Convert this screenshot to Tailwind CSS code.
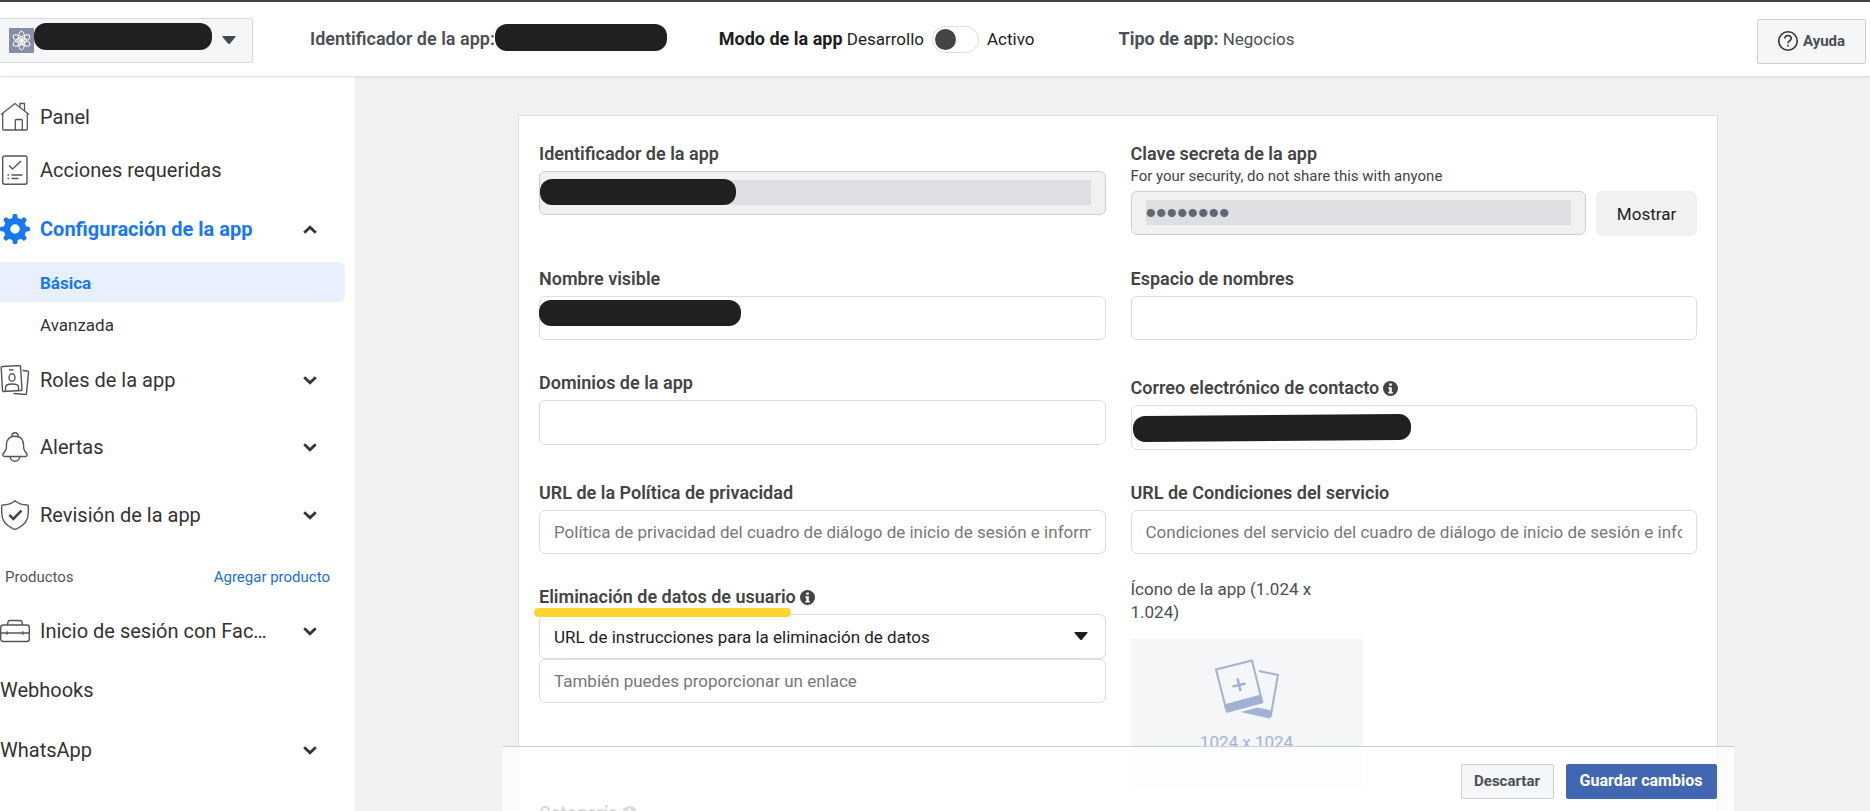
<!DOCTYPE html>
<html lang="es">
  <head>
    <meta charset="UTF-8">
    <meta name="viewport" content="width=device-width, initial-scale=1.0">
    <title>Configuración de la app</title>
    <script src="https://cdn.jsdelivr.net/npm/@tailwindcss/browser@4"></script>
  </head>
  <body class="h-screen flex flex-col overflow-hidden bg-white font-['Roboto',sans-serif] text-[17px] leading-6 text-[#1c1e21]">

    <!-- Cabecera -->
    <header class="shrink-0 h-[77px] flex items-center border-t-2 border-t-[#444] border-b border-b-[#dfe1e4] shadow-xs z-10 pr-1 whitespace-nowrap">
      <button type="button" aria-label="Seleccionar app" class="mt-[2px] w-[253px] h-[45px] flex items-center shrink-0 bg-[#f5f6f8] border border-l-0 border-[#d5d8de] rounded-r-xs pl-[9px] pr-4">
        <svg class="w-[25px] h-[25px] shrink-0" viewBox="0 0 25 25" fill="none" stroke="#fff">
          <rect width="25" height="25" rx="1" fill="#858ea3" stroke="none"/>
          <ellipse cx="12.500" cy="12.500" rx="3.500" ry="9.500"/>
          <ellipse cx="12.500" cy="12.500" rx="3.500" ry="9.500" transform="rotate(60 12.500 12.500)"/>
          <ellipse cx="12.500" cy="12.500" rx="3.500" ry="9.500" transform="rotate(120 12.500 12.500)"/>
          <circle cx="12.500" cy="12.500" r="2" fill="#fff"/>
        </svg>
        <span class="w-[178px] h-[27px] mb-2 shrink-0 rounded-xl bg-[#202020]"></span>
        <svg class="ml-auto w-[14px] h-2" viewBox="0 0 14 8"><path d="M1 0h12q1 0 .5 1L8 7.500q-1 1-2 0L.5 1Q0 0 1 0z" fill="#444950"/></svg>
      </button>
      <div class="ml-[57px] flex items-center text-[#4b4f56]">
        <b class="text-[18px] font-semibold">Identificador de la app:</b>
        <span class="w-[172px] h-[27px] mb-1 rounded-xl bg-[#202020]"></span>
      </div>
      <div class="ml-[52px] flex items-center">
        <span><b class="text-[18px]">Modo de la app</b> Desarrollo</span>
        <input id="modo" type="checkbox" role="switch" class="appearance-none ml-2 mr-2 w-[47px] h-[27px] rounded-full border border-[#dadde1] bg-white flex items-center px-[2px] before:content-[''] before:block before:w-[21px] before:h-[21px] before:rounded-full before:bg-[#444]">
        <label for="modo">Activo</label>
      </div>
      <div class="ml-[84px] text-[#4b4f56]"><b class="text-[18px]">Tipo de app:</b> Negocios</div>
      <button type="button" class="ml-auto mt-1 w-[109px] h-[45px] flex items-center justify-center gap-[5px] bg-[#f5f6f8] border border-[#ccd0d5] rounded-xs text-[15px] font-bold text-[#4b4f56]">
        <svg class="w-5 h-5" viewBox="0 0 20 20" fill="none" stroke="#333" stroke-width="1.600">
          <circle cx="10" cy="10" r="9.200"/>
          <path d="M6.800 7.500c0-4 6.400-4 6.400 0 0 2.300-3.200 2.300-3.200 4.700M10 13.800v1.700"/>
        </svg>
        Ayuda
      </button>
    </header>

    <div class="flex-1 min-h-0 flex">
      <!-- Menú lateral -->
      <nav class="w-[355px] shrink-0 pt-[13px] text-[20px] text-[#333] overflow-hidden">
        <a href="#" class="h-[54px] flex items-center gap-[10px]">
          <svg class="w-[30px] h-[30px]" viewBox="0 0 30 30" fill="none" stroke="#555" stroke-width="1.300">
            <path d="M1 12.500 15 1.500l14 11M2.700 11.500V27q0 1 1 1h22.600q1 0 1-1V11.500M20 5.200V1.500h4.500v7.200M15.300 28V18.500q0-1 1-1h5q1 0 1 1V28"/>
          </svg>
          Panel
        </a>
        <a href="#" class="h-[52px] flex items-center gap-[10px]">
          <svg class="w-[30px] h-[30px]" viewBox="0 0 30 30" fill="none" stroke="#555" stroke-width="1.400">
            <rect x="2.700" y="1" width="24.300" height="28.300" rx="2"/>
            <path d="m9 10.500 3.500 3.500L21 6M11.500 20h11M11.500 23.500h7M7.500 20H9M7.500 23.500H9"/>
          </svg>
          Acciones requeridas
        </a>
        <a href="#" class="h-[66px] flex items-center gap-[10px] pr-[38px] font-bold text-[#1877f2]">
          <svg class="w-[30px] h-[30px]" viewBox="0 0 30 30" fill="none">
            <circle cx="15" cy="15" r="8" stroke="#1877f2" stroke-width="6.500"/>
            <g fill="#1877f2">
              <path id="diente" d="M12 6l.7-4.800q.2-1.200 1.300-1.200h2q1.100 0 1.300 1.200L18 6z"/>
              <use href="#diente" transform="rotate(45 15 15)"/>
              <use href="#diente" transform="rotate(90 15 15)"/>
              <use href="#diente" transform="rotate(135 15 15)"/>
              <use href="#diente" transform="rotate(180 15 15)"/>
              <use href="#diente" transform="rotate(225 15 15)"/>
              <use href="#diente" transform="rotate(270 15 15)"/>
              <use href="#diente" transform="rotate(315 15 15)"/>
            </g>
          </svg>
          Configuración de la app
          <svg class="ml-auto w-[14px] h-[9px]" viewBox="0 0 14 9" fill="none" stroke="#333" stroke-width="2.800"><path d="m1.200 7.700 5.800-5.500 5.800 5.500"/></svg>
        </a>
        <a href="#" class="h-10 mr-[10px] flex items-center pl-10 pt-[2px] rounded-r-md bg-[#e7f0fc] text-[17px] font-bold text-[#1877f2]">Básica</a>
        <a href="#" class="h-10 my-[3px] flex items-center pl-10 text-[17px]">Avanzada</a>
        <a href="#" class="h-16 flex items-center gap-[10px] pr-[38px]">
          <svg class="w-[30px] h-[30px]" viewBox="0 0 30 30" fill="none" stroke="#555" stroke-width="1.400">
            <path d="m2.500 1.500 17-1q1 0 1 1l1.500 23q0 1-1 1l-17.500 1q-1 0-1-1L1.200 2.500q0-1 1.300-1zM22.500 5.500l5 .5q1 0 1 1l-2 21.500q0 1-1 1L13.500 28.500M9 5l4.500-.2"/>
            <ellipse cx="12" cy="12.500" rx="3" ry="3.800"/>
            <path d="M5.500 26v-3.500q0-3.500 6.500-3.500t6.500 3v3.500"/>
          </svg>
          Roles de la app
          <svg class="ml-auto w-[14px] h-[9px]" viewBox="0 0 14 9" fill="none" stroke="#333" stroke-width="2.800"><path d="m1.200 1.300 5.800 5.500 5.800-5.500"/></svg>
        </a>
        <a href="#" class="h-[70px] flex items-center gap-[10px] pr-[38px]">
          <svg class="w-[30px] h-[30px]" viewBox="0 0 30 30" fill="none" stroke="#555" stroke-width="1.400">
            <path d="M15 4.200c6 0 8.500 4 8.500 8.500 0 5 .8 6 2.800 8.300 1.700 2 .8 3.500-1 3.500H4.700c-1.800 0-2.700-1.500-1-3.500 2-2.300 2.800-3.300 2.800-8.300 0-4.500 2.500-8.500 8.500-8.500zM11.800 4.500c0-5 6.400-5 6.400 0M10.300 24.700c0 6 9.400 6 9.400 0"/>
          </svg>
          Alertas
          <svg class="ml-auto w-[14px] h-[9px]" viewBox="0 0 14 9" fill="none" stroke="#333" stroke-width="2.800"><path d="m1.200 1.300 5.800 5.500 5.800-5.500"/></svg>
        </a>
        <a href="#" class="h-[66px] flex items-center gap-[10px] pr-[38px]">
          <svg class="w-[30px] h-[30px]" viewBox="0 0 30 30" fill="none" stroke="#555" stroke-width="1.400">
            <path d="M15 .8c2.500 2.300 6 4 12.300 4.200q1 0 1 1v6.500c0 8.500-5 13.500-11.500 16.300q-1.800.8-3.600 0C6.700 26 1.700 21 1.700 12.500V6q0-1 1-1C9 4.800 12.500 3.100 15 .8z"/>
            <path d="m9.300 14.800 4 4 8.200-8.200" stroke="#444" stroke-width="2.600"/>
          </svg>
          Revisión de la app
          <svg class="ml-auto w-[14px] h-[9px]" viewBox="0 0 14 9" fill="none" stroke="#333" stroke-width="2.800"><path d="m1.200 1.300 5.800 5.500 5.800-5.500"/></svg>
        </a>
        <div class="h-[58px] flex items-center justify-between pl-[5px] pr-[25px] text-[15px]">
          <span class="text-[#555]">Productos</span>
          <a href="#" class="text-[#216fdb]">Agregar producto</a>
        </div>
        <a href="#" class="h-[50px] flex items-center gap-[10px] pr-[38px]">
          <svg class="w-[30px] h-[30px]" viewBox="0 0 30 30" fill="none" stroke="#555" stroke-width="1.400">
            <rect x=".7" y="9" width="28.600" height="16.500" rx="2.500"/>
            <path d="M7.500 9 8 6q.3-1.500 1.800-1.500h10.400q1.500 0 1.800 1.500l.5 3M1 17h28M7 15.300v3.400M23 15.300v3.400"/>
          </svg>
          Inicio de sesión con Fac…
          <svg class="ml-auto w-[14px] h-[9px]" viewBox="0 0 14 9" fill="none" stroke="#333" stroke-width="2.800"><path d="m1.200 1.300 5.800 5.500 5.800-5.500"/></svg>
        </a>
        <a href="#" class="h-[68px] flex items-center">Webhooks</a>
        <a href="#" class="h-[52px] flex items-center pr-[38px]">
          WhatsApp
          <svg class="ml-auto w-[14px] h-[9px]" viewBox="0 0 14 9" fill="none" stroke="#333" stroke-width="2.800"><path d="m1.200 1.300 5.800 5.500 5.800-5.500"/></svg>
        </a>
      </nav>

      <!-- Contenido -->
      <main class="relative flex-1 min-w-0 bg-[#f1f1f1]">
        <div class="h-full overflow-y-auto [scrollbar-width:none] pt-[38px] pl-[11px]">
          <form class="max-w-[1200px] mx-auto bg-white border border-[#dadde1] px-5 pt-[26px] pb-24">
            <div class="grid grid-cols-2 gap-x-[25px] gap-y-[31px]">
              <div>
                <label for="app-id" class="block text-[18px] font-semibold text-[#444]">Identificador de la app</label>
                <div class="relative mt-[5px] h-11 bg-[#f1f1f1] border border-[#ccd0d5] rounded-md pt-2 px-[14px]">
                  <input id="app-id" type="text" disabled class="block w-full h-[25px] bg-[#dddfe2]">
                  <span class="absolute left-0 top-[7px] w-[196px] h-[26px] rounded-xl bg-[#202020]"></span>
                </div>
              </div>
              <div>
                <label for="clave" class="block text-[18px] font-semibold text-[#444]">Clave secreta de la app</label>
                <p class="text-[15px] leading-5 text-[#444]">For your security, do not share this with anyone</p>
                <div class="mt-[5px] flex gap-[10px]">
                  <div class="flex-1 h-11 bg-[#f1f1f1] border border-[#ccd0d5] rounded-md pt-2 px-[14px]">
                    <input id="clave" type="password" disabled value="********" class="block w-full h-[25px] bg-[#dddfe2] font-['Liberation_Sans',sans-serif] text-[30px] text-[#606770]">
                  </div>
                  <button type="button" class="w-[101px] h-[45px] rounded-md bg-[#f1f1f1]">Mostrar</button>
                </div>
              </div>

              <div>
                <label for="nombre" class="block text-[18px] font-semibold text-[#444]">Nombre visible</label>
                <div class="relative mt-[5px]">
                  <input id="nombre" type="text" class="block w-full h-11 border border-[#dadde1] rounded-md px-[14px]">
                  <span class="absolute left-0 top-1 w-[202px] h-[26px] rounded-xl bg-[#202020]"></span>
                </div>
              </div>
              <div>
                <label for="espacio" class="block text-[18px] font-semibold text-[#444]">Espacio de nombres</label>
                <input id="espacio" type="text" class="block mt-[5px] w-full h-11 border border-[#dadde1] rounded-md px-[14px]">
              </div>

              <div>
                <label for="dominios" class="block text-[18px] font-semibold text-[#444]">Dominios de la app</label>
                <input id="dominios" type="text" class="block mt-[5px] w-full h-[45px] border border-[#dadde1] rounded-md px-[14px]">
              </div>
              <div class="pt-[5px]">
                <label for="correo" class="flex items-center gap-1 text-[18px] font-semibold text-[#444]">
                  Correo electrónico de contacto
                  <svg class="w-[15px] h-[15px]" viewBox="0 0 15 15"><circle cx="7.500" cy="7.500" r="7.500" fill="#444"/><path d="M6.300 2.500h2.500v2.300H6.300zM5.300 6.200h3.500v4.800h1v1.500H5.300V11h1V7.700h-1z" fill="#fff"/></svg>
                </label>
                <div class="relative mt-[5px]">
                  <input id="correo" type="email" class="block w-full h-[45px] border border-[#dadde1] rounded-md px-[14px]">
                  <span class="absolute left-[2px] top-[10px] w-[278px] h-[26px] rounded-xl bg-[#202020] -rotate-[0.4deg]"></span>
                </div>
              </div>

              <div>
                <label for="privacidad" class="block text-[18px] font-semibold text-[#444]">URL de la Política de privacidad</label>
                <input id="privacidad" type="url" placeholder="Política de privacidad del cuadro de diálogo de inicio de sesión e información de la app" class="block mt-[5px] w-full h-11 border border-[#dadde1] rounded-md px-[14px] placeholder:text-[#777]">
              </div>
              <div>
                <label for="condiciones" class="block text-[18px] font-semibold text-[#444]">URL de Condiciones del servicio</label>
                <input id="condiciones" type="url" placeholder="Condiciones del servicio del cuadro de diálogo de inicio de sesión e información de la app" class="block mt-[5px] w-full h-11 border border-[#dadde1] rounded-md px-[14px] placeholder:text-[#777]">
              </div>

              <div>
                <div class="relative">
                  <label for="eliminacion" class="flex items-center gap-1 text-[18px] font-semibold text-[#444]">
                    Eliminación de datos de usuario
                    <svg class="w-[15px] h-[15px]" viewBox="0 0 15 15"><circle cx="7.500" cy="7.500" r="7.500" fill="#444"/><path d="M6.300 2.500h2.500v2.300H6.300zM5.300 6.200h3.500v4.800h1v1.500H5.300V11h1V7.700h-1z" fill="#fff"/></svg>
                  </label>
                  <!-- Subrayado destacado -->
                  <span class="absolute z-10 -left-[5px] top-[23px] w-[257px] h-[9px] rounded-full bg-[#ffd42e]"></span>
                </div>
                <div class="relative mt-[5px]">
                  <select id="eliminacion" class="appearance-none block w-full h-[45px] bg-white border border-[#dadde1] rounded-md px-[14px]">
                    <option>URL de instrucciones para la eliminación de datos</option>
                  </select>
                  <svg class="absolute right-[18px] top-[18px] w-[14px] h-2 pointer-events-none" viewBox="0 0 14 8"><path d="M1 0h12q1 0 .5 1L8 7.500q-1 1-2 0L.5 1Q0 0 1 0z" fill="#1c1e21"/></svg>
                </div>
                <input type="url" aria-label="Enlace de eliminación de datos" placeholder="También puedes proporcionar un enlace" class="block w-full h-11 border border-[#dadde1] rounded-md px-[14px] placeholder:text-[#777]">
                <label for="categoria" class="mt-[98px] flex items-center gap-1 text-[18px] font-semibold text-[#444]">
                  Categoría
                  <svg class="w-[15px] h-[15px]" viewBox="0 0 15 15"><circle cx="7.500" cy="7.500" r="7.500" fill="#444"/><path d="M6.300 2.500h2.500v2.300H6.300zM5.300 6.200h3.500v4.800h1v1.500H5.300V11h1V7.700h-1z" fill="#fff"/></svg>
                </label>
                <select id="categoria" class="appearance-none block mt-[5px] w-full h-[45px] bg-white border border-[#dadde1] rounded-md px-[14px]">
                  <option></option>
                </select>
              </div>
              <div class="-mt-[7px] w-[232px]">
                <p class="leading-[23px] text-[#4b4f56] pr-8">Ícono de la app (1.024 x 1.024)</p>
                <button type="button" class="mt-[15px] w-full h-[150px] bg-[#f5f6f8] flex flex-col items-center pt-[20px] text-[#a0b4d8]">
                  <svg class="w-[66px] h-[60px] shrink-0" viewBox="0 0 66 60" fill="none" stroke="#a3b1d3" stroke-width="2">
                    <path d="M2 10.500 38 1.500 48 42 12.500 51.500z"/>
                    <path d="M10 45.500 47 35.500 49.500 44 12.500 54z" fill="#a3b1d3" stroke="none"/>
                    <path d="M23.500 19.500 26.500 32M18.500 27.500l13-3" stroke-width="2.600"/>
                    <path d="M45 12l19 4-7.500 42"/>
                    <path d="m26.500 53 17-4.500 15 3-2.500 8z" fill="#a3b1d3" stroke="none"/>
                  </svg>
                  <span class="mt-[11px]">1024 x 1024</span>
                </button>
              </div>
            </div>
          </form>
        </div>

        <!-- Barra de acciones -->
        <div class="absolute bottom-0 inset-x-0 pl-[11px]">
          <div class="max-w-[1231px] h-[65px] mx-auto flex justify-end gap-3 pt-[17px] pr-[17px] bg-white/80 border-t border-[#ccd0d5] font-bold">
            <button type="button" class="w-[93px] h-[35px] pb-[2px] bg-[#f5f6f8] border border-[#ccd0d5] rounded-xs text-[15px] text-[#4b4f56]">Descartar</button>
            <button type="button" class="w-[151px] h-[35px] pb-[2px] bg-[#4267b2] rounded-xs text-[16px] text-white">Guardar cambios</button>
          </div>
        </div>
      </main>
    </div>
  </body>
</html>
